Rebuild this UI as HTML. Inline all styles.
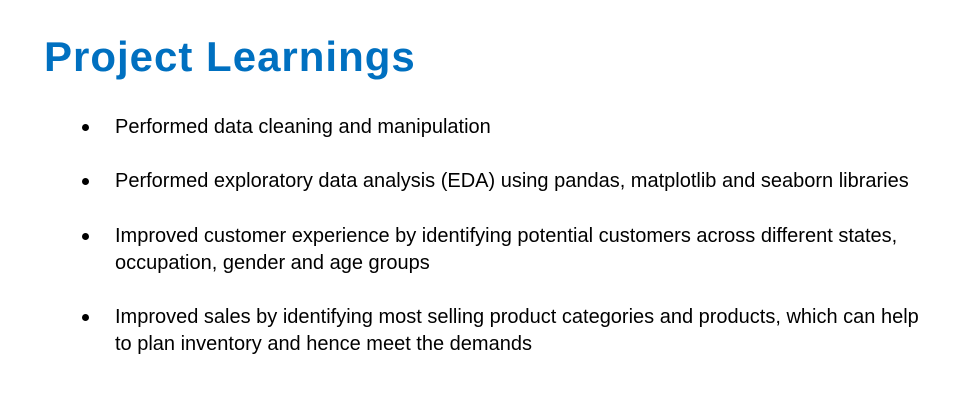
<!DOCTYPE html>
<html><head><style>
body{margin:0;width:973px;height:407px;background:#fff;position:relative;font-family:"Liberation Sans",sans-serif;overflow:hidden}
h1{position:absolute;left:44px;top:33px;margin:0;font-size:42px;font-weight:bold;color:#0070C0;letter-spacing:1px}
.i{position:absolute;left:115px;font-size:20px;line-height:27px;color:#000;white-space:nowrap;letter-spacing:0}
.i:before{content:"";position:absolute;left:-33px;top:10px;width:7px;height:7px;border-radius:50%;background:#000}
</style></head><body>
<h1>Project Learnings</h1>
<div class="i" style="top:114px">Performed data cleaning and manipulation</div>
<div class="i" style="top:168px">Performed exploratory data analysis (EDA) using pandas, matplotlib and seaborn libraries</div>
<div class="i" style="top:223px">Improved customer experience by identifying potential customers across different states,<br>occupation, gender and age groups</div>
<div class="i" style="top:304px">Improved sales by identifying most selling product categories and products, which can help<br>to plan inventory and hence meet the demands</div>
</body></html>
